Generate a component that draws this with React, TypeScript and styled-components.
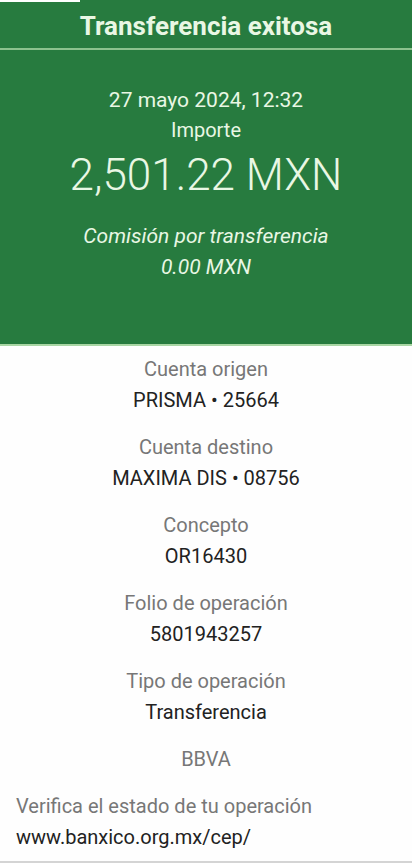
import React from "react";
import styled, { createGlobalStyle } from "styled-components";

const Global = createGlobalStyle`
  html, body { margin: 0; padding: 0; background: #ffffff; }
  body { font-family: Roboto, "Noto Sans", sans-serif; }
`;

const Page = styled.div`
  width: 412px;
  height: 863px;
  display: flex;
  flex-direction: column;
  background: #fefefe;
  overflow: hidden;
  position: relative;
`;

const Header = styled.div`
  background: #277b3f;
  border-bottom: 2px solid #a9d6a4;
  height: 344px;
  display: flex;
  flex-direction: column;
  align-items: center;
  color: #e9f7e4;
  position: relative;
  flex-shrink: 0;
`;

const TopStrip = styled.div`
  position: absolute;
  top: 0;
  left: 0;
  width: 80px;
  height: 2px;
  background: #ffffff;
`;

const Title = styled.div`
  height: 50px;
  width: 100%;
  display: flex;
  align-items: center;
  justify-content: center;
  font-weight: 700;
  font-size: 26px;
  border-bottom: 2px solid #8cc28e;
  box-sizing: border-box;
  padding-top: 4px;
`;

const HeaderLine = styled.div<{ $size?: number; $light?: boolean }>`
  font-size: ${(p) => p.$size ?? 20}px;
  font-weight: ${(p) => (p.$light ? 300 : 400)};
  line-height: ${(p) => (p.$size && p.$size > 30 ? 60 : 30)}px;
`;

const HeaderBody = styled.div`
  display: flex;
  flex-direction: column;
  align-items: center;
  padding-top: 35px;
`;

const CommissionBlock = styled.div`
  display: flex;
  flex-direction: column;
  align-items: center;
  margin-top: 16px;
`;

const CommissionLine = styled.div`
  font-size: 21px;
  font-style: italic;
  line-height: 31px;
`;

const Details = styled.div`
  display: flex;
  flex-direction: column;
  align-items: center;
  padding-top: 8px;
`;

const Field = styled.div`
  display: flex;
  flex-direction: column;
  align-items: center;
  margin-bottom: 16px;
`;

const Label = styled.div`
  font-size: 20px;
  line-height: 31px;
  color: #777777;
`;

const Value = styled.div`
  font-size: 20px;
  line-height: 31px;
  color: #222222;
`;

const Footer = styled.div`
  align-self: stretch;
  padding: 0 16px;
  margin-top: 0;
`;

const BottomLine = styled.div`
  position: absolute;
  left: 0;
  right: 0;
  bottom: 0;
  height: 2px;
  background: #d4d4d4;
`;

const fields = [
  { label: "Cuenta origen", value: "PRISMA • 25664" },
  { label: "Cuenta destino", value: "MAXIMA DIS • 08756" },
  { label: "Concepto", value: "OR16430" },
  { label: "Folio de operación", value: "5801943257" },
  { label: "Tipo de operación", value: "Transferencia" },
];

export default function App() {
  return (
    <>
      <Global />
      <Page>
        <Header>
          <TopStrip />
          <Title>Transferencia exitosa</Title>
          <HeaderBody>
            <HeaderLine $size={21}>27 mayo 2024, 12:32</HeaderLine>
            <HeaderLine>Importe</HeaderLine>
            <HeaderLine $size={44} $light>2,501.22 MXN</HeaderLine>
            <CommissionBlock>
              <CommissionLine>Comisión por transferencia</CommissionLine>
              <CommissionLine>0.00 MXN</CommissionLine>
            </CommissionBlock>
          </HeaderBody>
        </Header>
        <Details>
          {fields.map((f) => (
            <Field key={f.label}>
              <Label>{f.label}</Label>
              <Value>{f.value}</Value>
            </Field>
          ))}
          <Field>
            <Label>BBVA</Label>
          </Field>
          <Footer>
            <Label>Verifica el estado de tu operación</Label>
            <Value>www.banxico.org.mx/cep/</Value>
          </Footer>
        </Details>
        <BottomLine />
      </Page>
    </>
  );
}
